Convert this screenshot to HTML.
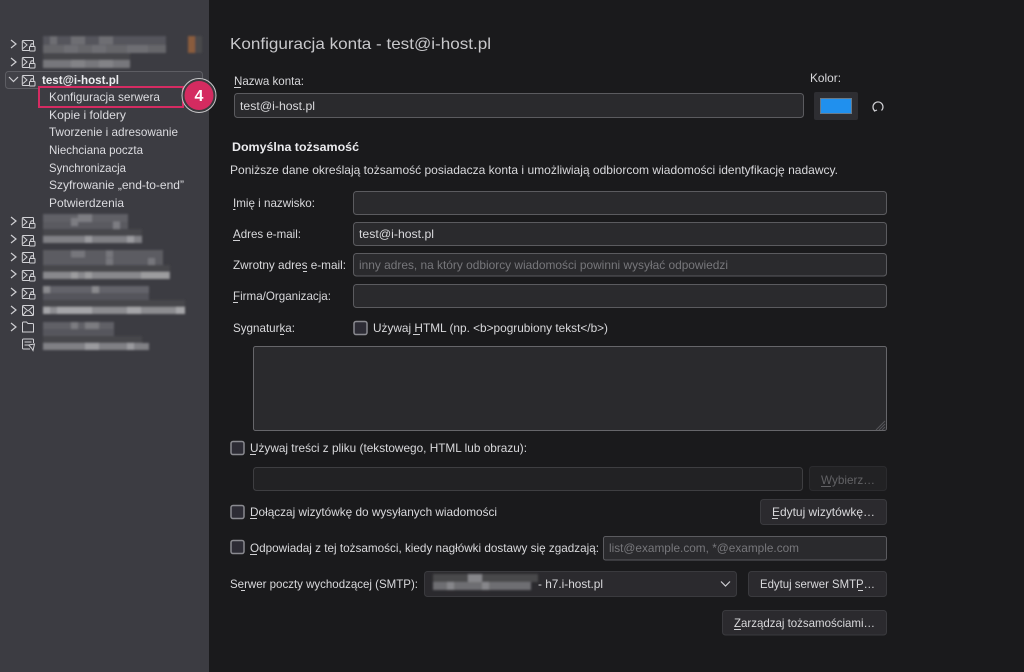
<!DOCTYPE html>
<html lang="pl"><head><meta charset="utf-8"><title>Konfiguracja konta</title>
<style>
html,body{margin:0;padding:0;background:#1a1a1c;width:1024px;height:672px;overflow:hidden}
svg{display:block}
text{font-family:"Liberation Sans",sans-serif;font-size:12px;fill:#d9d9dc}
.s{fill:#dcdce0}
.f{fill:#2a2a2d;stroke:#5b5b5f;stroke-width:1}
.b{fill:#2b2a2e;stroke:#3a3a3e;stroke-width:1}
.c{fill:#2d2c35;stroke:#8a8a90;stroke-width:1.5}
.u{stroke:#d0d0d3;stroke-width:1}
.ph{fill:#77777b}
.ic{fill:none;stroke:#d2d2d6;stroke-width:1}
.ch{fill:none;stroke:#cfcfd3;stroke-width:1.2}
</style></head><body>
<svg width="1024" height="672" viewBox="0 0 1024 672" xmlns="http://www.w3.org/2000/svg">
<defs>
<filter id="bl" x="-5%" y="-20%" width="110%" height="140%"><feGaussianBlur stdDeviation="1.1"/></filter>
<symbol id="acc" viewBox="0 0 16 14" width="16" height="14" overflow="visible">
<path class="ic" d="M12.500 5.500V2.400a.9.9 0 0 0-.9-.9H2.200a.9.9 0 0 0-.9.9v8.200a.9.9 0 0 0 .9.900H8M2 2.500l4 3.500-4 3.500"/>
<rect x="8.500" y="7.500" width="5.500" height="4.500" rx=".6" fill="#3c3c42" stroke="#d2d2d6"/>
<path class="ic" d="M9.700 7.500V6.300a1.500 1.500 0 0 1 3 0v1.200"/>
</symbol>
</defs>
<rect width="1024" height="672" fill="#1a1a1c"/>
<rect width="209" height="672" fill="#3c3c42"/>

<!-- blurred account names -->
<g filter="url(#bl)">
<rect x="43" y="36" width="123" height="9" fill="#55555b"/><rect x="43" y="45" width="123" height="8" fill="#66666b"/>
<path d="M50 40.500h7M71 40.500h14M99 40.500h14M64 49h14M92 49h14M127 49h21" stroke="#6e6e73" stroke-width="8"/>
<rect x="188" y="36" width="7" height="17" fill="#8a5c3c"/><rect x="195" y="36" width="7" height="17" fill="#49494b"/>
<rect x="43" y="53" width="87" height="7" fill="#47474c"/><rect x="43" y="60" width="87" height="8" fill="#77777c"/>
<path d="M71 64h14M99 64h14" stroke="#838387" stroke-width="8"/>

<rect x="43" y="214" width="85" height="8" fill="#606066"/><rect x="43" y="222" width="85" height="7" fill="#5a5a60"/>
<path d="M71 222h7M113 225.500h7M78 218h14" stroke="#7d7d82" stroke-width="8"/>
<rect x="43" y="229" width="99" height="7" fill="#47474c"/><rect x="43" y="236" width="99" height="7" fill="#808085"/>
<path d="M85 239.500h7M127 239.500h7" stroke="#9a9a9e" stroke-width="7"/>
<rect x="43" y="250" width="120" height="8" fill="#5c5c62"/><rect x="43" y="258" width="120" height="7" fill="#5c5c62"/>
<path d="M71 254h14M106 254h7M106 261.500h7M148 261.500h7" stroke="#76767b" stroke-width="7"/>
<rect x="43" y="265" width="127" height="7" fill="#47474c"/><rect x="43" y="272" width="127" height="7" fill="#88888c"/>
<path d="M71 275.500h7M85 275.500h7M141 275.500h28" stroke="#9c9c9f" stroke-width="7"/>
<rect x="43" y="286" width="106" height="7" fill="#64646a"/><rect x="43" y="293" width="106" height="7" fill="#55555b"/>
<path d="M43 289.500h7M92 289.500h7" stroke="#8a8a8e" stroke-width="7"/>
<rect x="43" y="300" width="142" height="7" fill="#46464b"/><rect x="43" y="307" width="142" height="7" fill="#8c8c90"/>
<path d="M43 310.500h7M57 310.500h35M127 310.500h14M176 310.500h9" stroke="#a5a5a8" stroke-width="7"/>
<rect x="43" y="322" width="71" height="7" fill="#606066"/><rect x="43" y="329" width="71" height="7" fill="#57575d"/>
<path d="M71 325.500h7M85 325.500h14" stroke="#7b7b80" stroke-width="7"/>
<rect x="43" y="336" width="99" height="7" fill="#47474c"/><rect x="43" y="343" width="106" height="7" fill="#808085"/>
<path d="M85 346.500h14M127 346.500h7" stroke="#9a9a9e" stroke-width="7"/>
</g>

<!-- tree icons -->
<path class="ch" d="M11 40l5 4-5 4M11 58l5 4-5 4M11 217l5 4-5 4M11 235l5 4-5 4M11 253l5 4-5 4M11 270l5 4-5 4M11 288l5 4-5 4M11 306l5 4-5 4M11 323l5 4-5 4"/>
<rect x="5.500" y="71.500" width="197" height="17" rx="3" fill="#414147" stroke="#5d5d63"/>
<path class="ch" d="M9 77l4.500 4.500L18 77"/>
<use href="#acc" x="21" y="39"/><use href="#acc" x="21" y="56"/><use href="#acc" x="21" y="74"/>
<use href="#acc" x="21" y="216"/><use href="#acc" x="21" y="234"/><use href="#acc" x="21" y="251"/><use href="#acc" x="21" y="269"/><use href="#acc" x="21" y="287"/>
<g class="ic">
<rect x="22.500" y="305.500" width="11" height="10" rx="1"/><path d="M23 306.500l5 4.500 5-4.500M23 315l3.500-4M33 315l-3.500-4"/>
<path d="M22.500 332v-9a1 1 0 0 1 1-1h3l1.500 1.500h4.500a1 1 0 0 1 1 1V332z"/>
<path d="M30 349h-6.500a1 1 0 0 1-1-1v-8a1 1 0 0 1 1-1h9a1 1 0 0 1 1 1v3M24.500 342h7M24.500 345h4M28.500 345l6-1-1.500 6.500-1.500-2.500z"/>
</g>
<text x="42" y="84" textLength="77" lengthAdjust="spacingAndGlyphs" style="font-weight:bold;fill:#ececef">test@i-host.pl</text>
<rect x="39" y="87" width="144" height="20" fill="#3c3c42" stroke="#d52b62" stroke-width="2"/>
<text class="s" x="49" y="101" textLength="111" lengthAdjust="spacingAndGlyphs">Konfiguracja serwera</text>
<text class="s" x="49" y="119" textLength="77" lengthAdjust="spacingAndGlyphs">Kopie i foldery</text>
<text class="s" x="49" y="136" textLength="129" lengthAdjust="spacingAndGlyphs">Tworzenie i adresowanie</text>
<text class="s" x="49" y="154" textLength="94" lengthAdjust="spacingAndGlyphs">Niechciana poczta</text>
<text class="s" x="49" y="172" textLength="77" lengthAdjust="spacingAndGlyphs">Synchronizacja</text>
<text class="s" x="49" y="189" textLength="135" lengthAdjust="spacingAndGlyphs">Szyfrowanie „end-to-end”</text>
<text class="s" x="49" y="207" textLength="75" lengthAdjust="spacingAndGlyphs">Potwierdzenia</text>
<circle cx="199" cy="95.500" r="17" fill="#3a3a3e" stroke="#c9c9cb" stroke-width="1"/>
<circle cx="199" cy="95.500" r="14.500" fill="#d42b60"/>
<text x="199" y="101" text-anchor="middle" style="font-size:16px;font-weight:bold;fill:#fff">4</text>

<!-- heading -->
<text x="230" y="49" textLength="261" lengthAdjust="spacingAndGlyphs" style="font-size:16px;fill:#c8c8cb">Konfiguracja konta - test@i-host.pl</text>
<text x="234" y="85" textLength="70" lengthAdjust="spacingAndGlyphs">Nazwa konta:</text>
<line class="u" x1="234" x2="241" y1="87.500" y2="87.500"/>
<text x="810" y="82" textLength="31" lengthAdjust="spacingAndGlyphs">Kolor:</text>
<rect class="f" x="234.500" y="93.500" width="569" height="24" rx="3"/>
<text x="240" y="110" textLength="75" lengthAdjust="spacingAndGlyphs">test@i-host.pl</text>
<rect x="814" y="92" width="44" height="28" rx="2" fill="#2e2e32"/>
<rect x="820.500" y="98.500" width="31" height="15" fill="#2090ee" stroke="#6a7a88"/>
<path class="ic" style="stroke-width:1.200" d="M881.500 110.500a5 5 0 1 0-6.800 .2M873 108.500l1.500 2.500 2.500-1"/>

<text x="232" y="151" textLength="127" lengthAdjust="spacingAndGlyphs" style="font-weight:bold;fill:#ececef">Domyślna tożsamość</text>
<text x="230" y="174" textLength="608" lengthAdjust="spacingAndGlyphs">Poniższe dane określają tożsamość posiadacza konta i umożliwiają odbiorcom wiadomości identyfikację nadawcy.</text>

<!-- fields -->
<rect class="f" x="353.500" y="191.500" width="533" height="23" rx="3"/>
<rect class="f" x="353.500" y="222.500" width="533" height="23" rx="3"/>
<rect class="f" x="353.500" y="253.500" width="533" height="22.500" rx="3"/>
<rect class="f" x="353.500" y="284.500" width="533" height="23" rx="3"/>
<text x="233" y="207" textLength="82" lengthAdjust="spacingAndGlyphs">Imię i nazwisko:</text>
<line class="u" x1="233" x2="235.500" y1="209.500" y2="209.500"/>
<text x="233" y="238" textLength="68" lengthAdjust="spacingAndGlyphs">Adres e-mail:</text>
<line class="u" x1="233" x2="240" y1="240.500" y2="240.500"/>
<text x="233" y="269" textLength="113" lengthAdjust="spacingAndGlyphs">Zwrotny adres e-mail:</text>
<line class="u" x1="303" x2="307" y1="271.500" y2="271.500"/>
<text x="233" y="300" textLength="98" lengthAdjust="spacingAndGlyphs">Firma/Organizacja:</text>
<line class="u" x1="233" x2="238" y1="302.500" y2="302.500"/>
<text x="359" y="238" textLength="75" lengthAdjust="spacingAndGlyphs">test@i-host.pl</text>
<text class="ph" x="359" y="269" textLength="369" lengthAdjust="spacingAndGlyphs">inny adres, na który odbiorcy wiadomości powinni wysyłać odpowiedzi</text>

<!-- signature -->
<text x="233" y="332" textLength="62" lengthAdjust="spacingAndGlyphs">Sygnaturka:</text>
<line class="u" x1="280" x2="284" y1="334.500" y2="334.500"/>
<rect class="c" x="354" y="321.500" width="13" height="13" rx="2"/>
<text x="373" y="332" textLength="235" lengthAdjust="spacingAndGlyphs">Używaj HTML (np. &lt;b&gt;pogrubiony tekst&lt;/b&gt;)</text>
<line class="u" x1="413" x2="420" y1="334.500" y2="334.500"/>
<rect class="f" x="253.500" y="346.500" width="633" height="84" rx="2" style="stroke:#66666a"/>
<path d="M885 421l-9 9M885 424l-6 6M885 427l-3 3" stroke="#55555a" fill="none"/>

<rect class="c" x="231" y="441.500" width="13" height="13" rx="2"/>
<text x="250" y="452" textLength="277" lengthAdjust="spacingAndGlyphs">Używaj treści z pliku (tekstowego, HTML lub obrazu):</text>
<line class="u" x1="250" x2="256" y1="454.500" y2="454.500"/>
<rect x="253.500" y="467.500" width="549" height="23" rx="3" fill="#222224" stroke="#3e3e41"/>
<rect x="809.500" y="466.500" width="77" height="24" rx="3" fill="#222224" stroke="#2b2b2e"/>
<text x="821" y="484" textLength="54" lengthAdjust="spacingAndGlyphs" style="fill:#626265">Wybierz…</text>
<line x1="821" x2="831" y1="486.500" y2="486.500" stroke="#626265"/>

<rect class="c" x="231" y="505.500" width="13" height="13" rx="2"/>
<text x="250" y="516" textLength="247" lengthAdjust="spacingAndGlyphs">Dołączaj wizytówkę do wysyłanych wiadomości</text>
<line class="u" x1="250" x2="257" y1="518.500" y2="518.500"/>
<rect class="b" x="760.500" y="499.500" width="126" height="25" rx="3"/>
<text x="772" y="516" textLength="103" lengthAdjust="spacingAndGlyphs">Edytuj wizytówkę…</text>
<line class="u" x1="772" x2="778" y1="518.500" y2="518.500"/>

<rect class="c" x="231" y="540.500" width="13" height="13" rx="2"/>
<text x="250" y="552" textLength="349" lengthAdjust="spacingAndGlyphs">Odpowiadaj z tej tożsamości, kiedy nagłówki dostawy się zgadzają:</text>
<line class="u" x1="250" x2="257" y1="554.500" y2="554.500"/>
<rect class="f" x="603.500" y="536.500" width="283" height="23.500" rx="2"/>
<text class="ph" x="609" y="552" textLength="190" lengthAdjust="spacingAndGlyphs">list@example.com, *@example.com</text>

<text x="230" y="588" textLength="188" lengthAdjust="spacingAndGlyphs">Serwer poczty wychodzącej (SMTP):</text>
<line class="u" x1="241" x2="245" y1="590.500" y2="590.500"/>
<rect class="b" x="424.500" y="571.500" width="312" height="25" rx="3"/>
<g filter="url(#bl)">
<rect x="433" y="574" width="105" height="8" fill="#48484c"/><rect x="433" y="582" width="98" height="8" fill="#6e6e72"/>
<path d="M468 578h14M482 586h7M447 586h7" stroke="#86868a" stroke-width="8"/>
</g>
<text x="538" y="588" textLength="65" lengthAdjust="spacingAndGlyphs">- h7.i-host.pl</text>
<path class="ch" d="M721 581.500l4.500 4.500 4.500-4.500"/>
<rect class="b" x="748.500" y="571.500" width="138" height="25" rx="3"/>
<text x="760" y="588" textLength="115" lengthAdjust="spacingAndGlyphs">Edytuj serwer SMTP…</text>
<line class="u" x1="858" x2="863" y1="590.500" y2="590.500"/>
<rect class="b" x="722.500" y="610.500" width="164" height="24.500" rx="3"/>
<text x="734" y="627" textLength="141" lengthAdjust="spacingAndGlyphs">Zarządzaj tożsamościami…</text>
<line class="u" x1="734" x2="741" y1="629.500" y2="629.500"/>
</svg>
</body></html>
